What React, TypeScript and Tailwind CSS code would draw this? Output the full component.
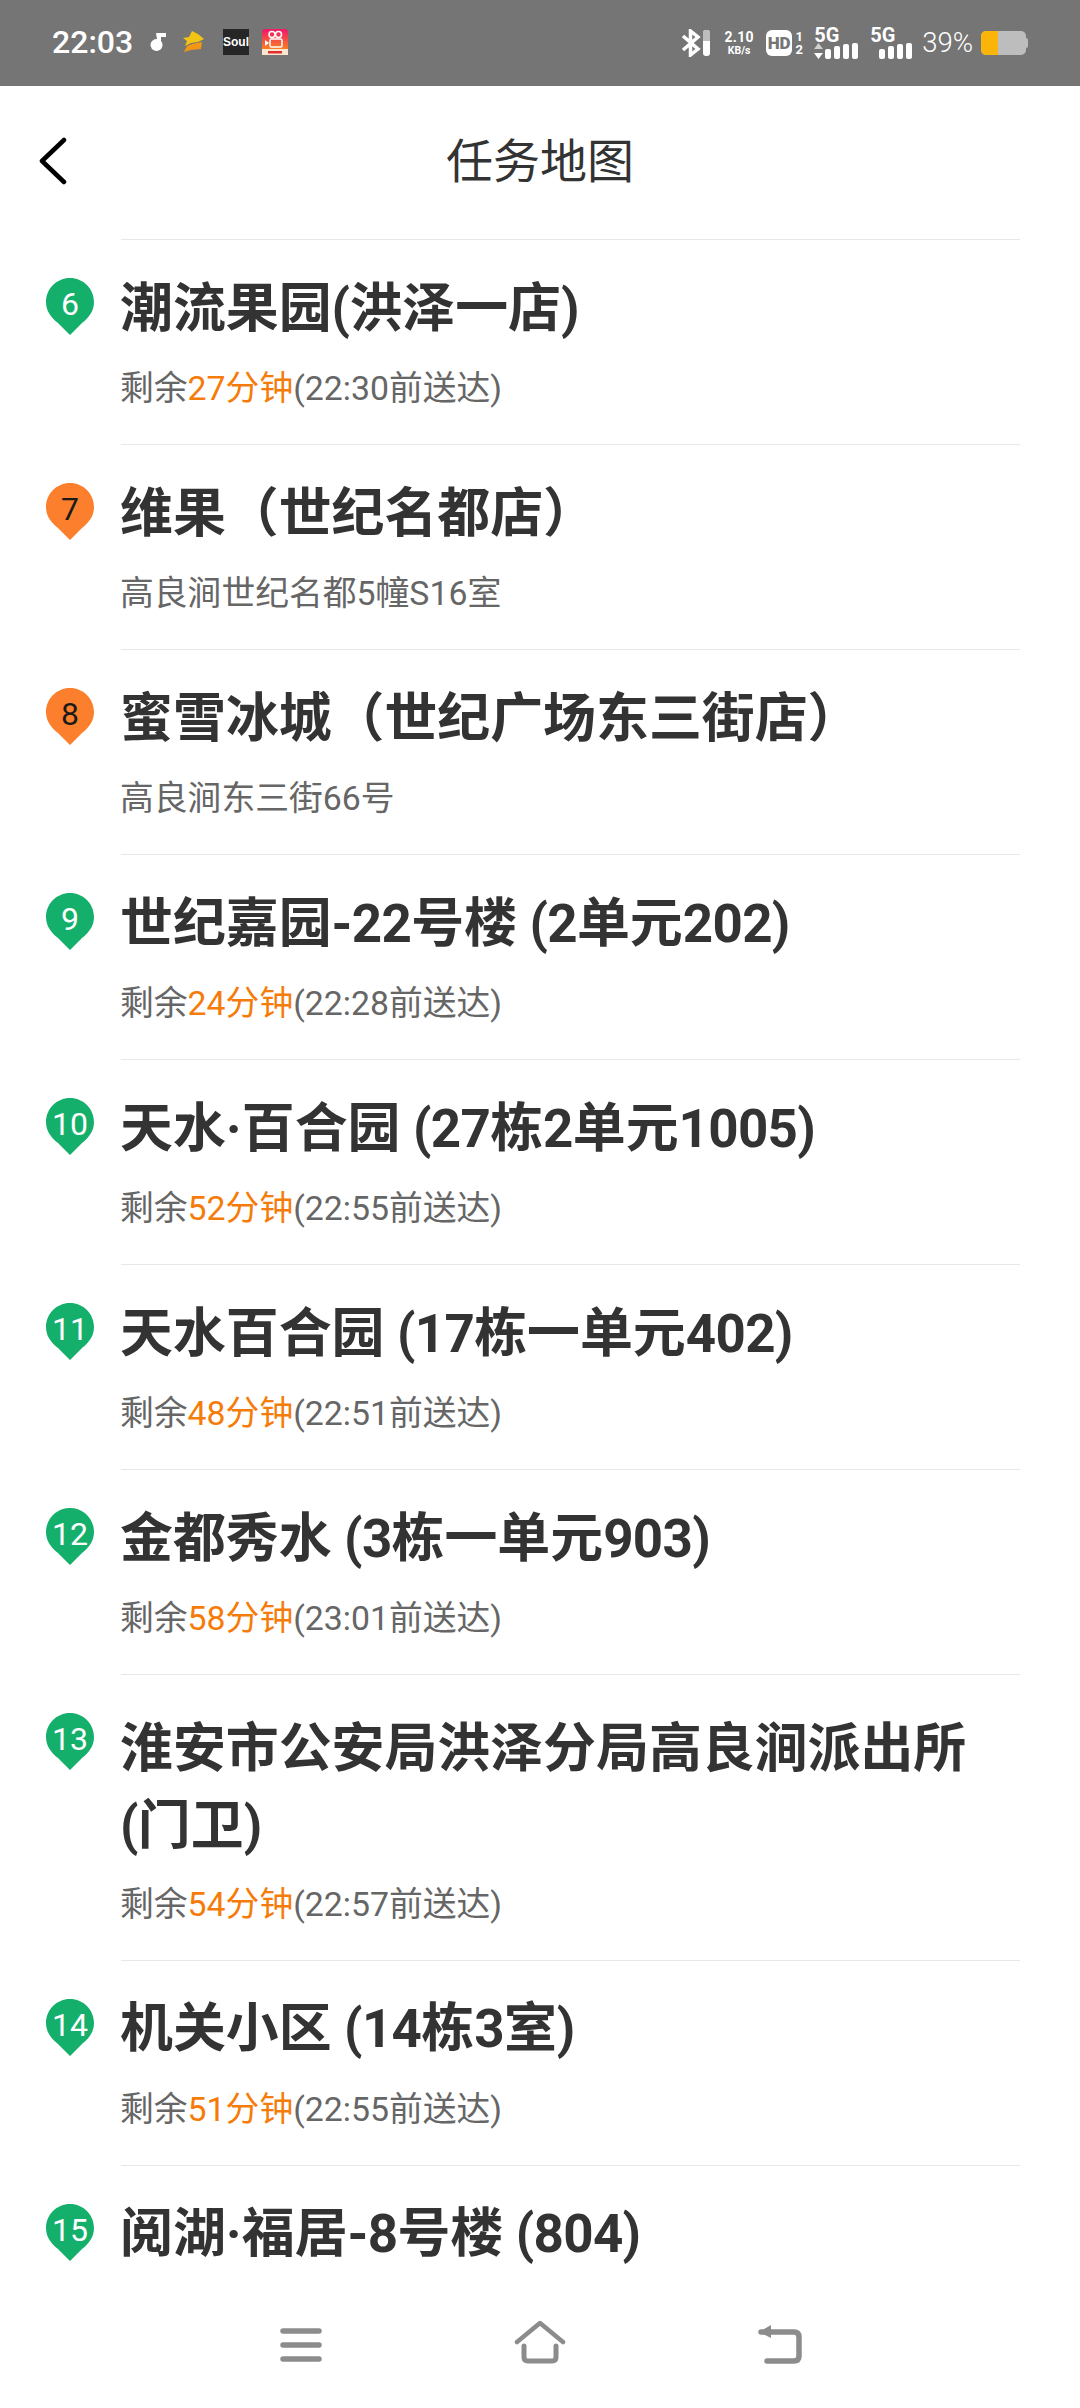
import React from 'react';

type Task = {
  no: number;
  title: string;
  addr?: string;
  left?: string;
  at?: string;
  orange?: boolean;
  tall?: boolean;
};

const tasks: Task[] = [
  { no: 6, title: '潮流果园(洪泽一店)', left: '27分钟', at: '(22:30前送达)' },
  { no: 7, title: '维果（世纪名都店）', addr: '高良涧世纪名都5幢S16室', orange: true },
  { no: 8, title: '蜜雪冰城（世纪广场东三街店）', addr: '高良涧东三街66号', orange: true },
  { no: 9, title: '世纪嘉园-22号楼 (2单元202)', left: '24分钟', at: '(22:28前送达)' },
  { no: 10, title: '天水·百合园 (27栋2单元1005)', left: '52分钟', at: '(22:55前送达)' },
  { no: 11, title: '天水百合园 (17栋一单元402)', left: '48分钟', at: '(22:51前送达)' },
  { no: 12, title: '金都秀水 (3栋一单元903)', left: '58分钟', at: '(23:01前送达)' },
  { no: 13, title: '淮安市公安局洪泽分局高良涧派出所 (门卫)', left: '54分钟', at: '(22:57前送达)', tall: true },
  { no: 14, title: '机关小区 (14栋3室)', left: '51分钟', at: '(22:55前送达)' },
  { no: 15, title: '阅湖·福居-8号楼 (804)' },
];

// bold latin runs sit a bit tighter than the CJK around them
function Title({ text }: { text: string }) {
  const parts = text.split(/([-0-9() ]+)/);
  return (
    <>
      {parts.map((p, i) =>
        i % 2 === 1 ? (
          <span key={i} className="tracking-[-0.65px]">
            {p}
          </span>
        ) : (
          p
        ),
      )}
    </>
  );
}

function Pin({ no, orange }: { no: number; orange?: boolean }) {
  return (
    <div className="relative w-[48px] h-[57px]">
      <svg width="48" height="57" viewBox="0 0 48 57" className="absolute inset-0">
        <path
          d="M24 0C37.3 0 48 10.7 48 24C48 33 43 39.500 36 45L24 57L12 45C5 39.500 0 33 0 24C0 10.700 10.700 0 24 0Z"
          fill={orange ? '#fb7f2c' : '#14b06b'}
        />
      </svg>
      <div
        className={`absolute left-0 top-[6px] w-[48px] h-[40px] flex items-center justify-center text-[32px] leading-[40px] ${
          orange ? 'text-[#1a1a1a]' : 'text-white'
        }`}
      >
        {no}
      </div>
    </div>
  );
}

function Row({ task }: { task: Task }) {
  return (
    <div className="flex">
      <div className="w-[121px] shrink-0 pl-[46px] pt-[39px]">
        <Pin no={task.no} orange={task.orange} />
      </div>
      <div
        className={`w-[899px] border-t-[1.5px] border-[#e8e8e8] ${
          task.tall ? 'pt-[36px] pb-[32px]' : 'pt-[30.500px] pb-[32px]'
        }`}
      >
        <div className="ml-[-1px] text-[52.900px] leading-[77px] font-bold text-[#333333]">
          <Title text={task.title} />
        </div>
        <div
          className={`ml-[-1px] text-[33.800px] leading-[46px] text-[#666666] ${
            task.tall ? 'mt-[16.500px]' : 'mt-[18.500px]'
          }`}
        >
          {task.addr ? (
            task.addr
          ) : task.left ? (
            <>
              剩余<span className="text-[#f57c0a]">{task.left}</span>
              {task.at}
            </>
          ) : null}
        </div>
      </div>
    </div>
  );
}

function Bars({ arrows }: { arrows?: boolean }) {
  const hs = [10, 13, 15, 16];
  return (
    <div className="flex items-end gap-[3px] h-[16px]">
      {arrows && (
        <svg width="9" height="16" viewBox="0 0 9 16" className="mr-[-1px]">
          <path d="M4.500 0L9 6H0Z" fill="#d0d0d0" />
          <path d="M4.500 16L0 10H9Z" fill="#ffffff" />
        </svg>
      )}
      {hs.map((h, i) => (
        <div key={i} className="w-[6px] rounded-[2px] bg-white" style={{ height: h }} />
      ))}
    </div>
  );
}

function StatusBar() {
  return (
    <div className="h-[86px] bg-[#757575] flex items-center pl-[52px] pr-[52px] text-white">
      <div className="text-[32px] leading-[30px] font-medium w-[78px] mt-[-2px]">22:03</div>
      <div className="flex items-center ml-[20px] mt-[-2px]">
        {/* note */}
        <svg width="18" height="20" viewBox="0 0 18 20">
          <path d="M6 1L16 1L16 5L11 5L11 9A6 6 0 1 1 7 7Z" fill="#fff" />
        </svg>
        {/* dragon */}
        <svg width="22" height="22" viewBox="0 0 22 22" className="ml-[15px]">
          <path d="M0 7L6 6L9 0L15 3L21 8L15 11L8 12L2 15L4 10Z" fill="#f2c413" />
          <path d="M4 15L9 13L19 11L18 18L8 19L1 21Z" fill="#f29613" />
        </svg>
        {/* soul */}
        <div className="ml-[18px] w-[26px] h-[26px] bg-[#262626] text-[12px] leading-[26px] font-bold text-center text-white font-['Liberation_Sans',sans-serif]">
          Soul
        </div>
        {/* red app */}
        <svg width="26" height="26" viewBox="0 0 26 26" className="ml-[13px]">
          <defs>
            <linearGradient id="ks" x1="0" y1="0" x2="0" y2="1">
              <stop offset="0" stopColor="#f0186a" />
              <stop offset="0.75" stopColor="#fb7c22" />
            </linearGradient>
          </defs>
          <rect width="26" height="26" rx="3" fill="url(#ks)" />
          <rect y="20" width="26" height="6" fill="#fbe6d0" />
          <circle cx="10" cy="5.500" r="3" fill="none" stroke="#fff" strokeWidth="1.500" />
          <circle cx="16.500" cy="5.500" r="3" fill="none" stroke="#fff" strokeWidth="1.500" />
          <rect x="8" y="10" width="12" height="8" rx="1.500" fill="none" stroke="#fff" strokeWidth="1.500" />
          <path d="M3 11L7 14L3 17Z" fill="#fff" />
          <rect x="6" y="22" width="14" height="2.500" fill="#e03030" />
        </svg>
      </div>

      <div className="ml-auto flex items-center">
        {/* bluetooth */}
        <svg width="20" height="28" viewBox="0 0 20 28">
          <path d="M2 7L17 20L9.500 26V2L17 8L2 21" fill="none" stroke="#fff" strokeWidth="3.500" />
        </svg>
        <div className="relative ml-[2px] w-[7px] h-[26px] rounded-[3px] bg-white overflow-hidden">
          <div className="h-[11px] bg-[#bdbdbd]" />
        </div>
        <div className="ml-[13px] w-[32px] flex flex-col items-center font-bold">
          <div className="text-[14px] leading-[15px] tracking-[0.3px]">2.10</div>
          <div className="text-[10.500px] leading-[12px]">KB/s</div>
        </div>
        <div className="ml-[11px] w-[26px] h-[26px] rounded-[6px] bg-white flex items-center justify-center text-[#757575] text-[17px] font-black leading-none">
          HD
        </div>
        <div className="ml-[2px] w-[10px] flex flex-col items-center text-[13px] leading-[13px] font-bold">
          <div>1</div>
          <div>2</div>
        </div>
        <div className="ml-[10px] flex flex-col items-start">
          <div className="text-[20px] leading-[15px] font-bold">5G</div>
          <Bars arrows />
        </div>
        <div className="ml-[12px] flex flex-col items-start">
          <div className="text-[20px] leading-[15px] font-bold">5G</div>
          <div className="ml-[9px]">
            <Bars />
          </div>
        </div>
        <div className="ml-[10px] text-[27.500px] leading-[30px] font-light">39%</div>
        <div className="ml-[8px] flex items-center">
          <div className="w-[45px] h-[24px] rounded-[5px] bg-[#bdbdbd] overflow-hidden">
            <div className="w-[17px] h-[24px] bg-[#fbb40a]" />
          </div>
          <div className="w-[2px] h-[10px] rounded-r-[2px] bg-[#bdbdbd]" />
        </div>
      </div>
    </div>
  );
}

function Header() {
  return (
    <div className="relative h-[153px] flex items-center justify-center shrink-0">
      <svg width="30" height="48" viewBox="0 0 30 48" className="absolute left-[38px] top-[51px]">
        <path d="M26 3L4 24L26 45" fill="none" stroke="#000" strokeWidth="4.500" strokeLinecap="round" strokeLinejoin="round" />
      </svg>
      <div className="text-[47px] leading-[60px] text-[#333333] mt-[-1px]">任务地图</div>
    </div>
  );
}

function BottomNav() {
  return (
    <div className="absolute left-0 bottom-0 w-full h-[112px] bg-white">
      <div className="relative w-full h-full">
        <svg width="42" height="34" viewBox="0 0 42 34" className="absolute left-[280px] top-[32px]">
          <path d="M3 3H39M3 17H39M3 31H39" stroke="#8c8c8c" strokeWidth="5.500" strokeLinecap="round" />
        </svg>
        <svg width="52" height="44" viewBox="0 0 52 44" className="absolute left-[514px] top-[24px]">
          <path d="M3 22L26 3L49 22" fill="none" stroke="#8c8c8c" strokeWidth="4.500" strokeLinecap="round" strokeLinejoin="round" />
          <path d="M10 26V37Q10 41 14 41H38Q42 41 42 37V26" fill="none" stroke="#8c8c8c" strokeWidth="5" strokeLinecap="round" />
        </svg>
        <svg width="46" height="40" viewBox="0 0 46 40" className="absolute left-[757px] top-[28px]">
          <path d="M10 37H37Q42 37 42 32V13Q42 8 37 8H4" fill="none" stroke="#8c8c8c" strokeWidth="5.500" strokeLinecap="round" />
          <path d="M14 1L2 8L14 14Z" fill="#8c8c8c" />
        </svg>
      </div>
    </div>
  );
}

export default function App() {
  return (
    <div className="relative w-[1080px] h-[2408px] overflow-hidden bg-white font-['Roboto','Noto_Sans_CJK_SC',sans-serif]">
      <StatusBar />
      <Header />
      <div className="flex flex-col">
        {tasks.map((t) => (
          <Row key={t.no} task={t} />
        ))}
      </div>
      <BottomNav />
    </div>
  );
}
